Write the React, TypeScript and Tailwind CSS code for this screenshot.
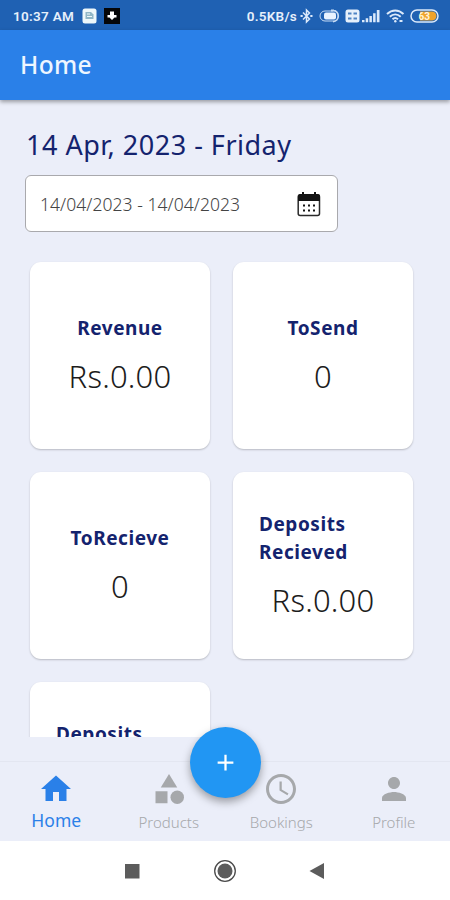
import React from 'react';
import clsx from 'clsx';
import type { IconType } from 'react-icons';
import { MdAccessTime, MdAdd, MdCategory, MdHome, MdPerson } from 'react-icons/md';

interface Stat {
    title: string;
    value?: string;
}

interface Tab {
    label: string;
    icon: IconType;
    active?: boolean;
}

const stats: Stat[] = [
    { title: 'Revenue', value: 'Rs.0.00' },
    { title: 'ToSend', value: '0' },
    { title: 'ToRecieve', value: '0' },
    { title: 'Deposits Recieved', value: 'Rs.0.00' },
    { title: 'Deposits' },
];

const tabs: Tab[] = [
    { label: 'Home', icon: MdHome, active: true },
    { label: 'Products', icon: MdCategory },
    { label: 'Bookings', icon: MdAccessTime },
    { label: 'Profile', icon: MdPerson },
];

const StatusBar = () => (
    <div className="flex h-[30px] shrink-0 items-center bg-[#1f61b3] pt-[2px] pl-[13px] pr-[11px] font-['Roboto',sans-serif] text-[13.5px] font-semibold text-[#e6f0fb]">
        <span className="w-[69px] whitespace-nowrap tracking-[0.3px]">10:37 AM</span>
        <svg className="h-4 w-[15px]" viewBox="0 0 15 16">
            <rect x="0.5" y="0.5" width="14" height="15" rx="2.5" fill="#edf7fa" />
            <path d="M3.500 4h5.500l2.500 2.500V11h-8z" fill="#8fb6c6" />
            <path d="M5 6h3M5 8.500h5" stroke="#edf7fa" />
        </svg>
        <svg className="ml-[7px] h-4 w-4" viewBox="0 0 16 16">
            <rect width="16" height="16" fill="#050608" />
            <path d="M6 3.500h4V7h2.500v2.500h-2L8 12 5.500 9.500h-2V7H6z" fill="#fff" />
        </svg>
        <span className="ml-auto whitespace-nowrap tracking-[0.25px]">0.5KB/s</span>
        <svg className="ml-[3px] h-4 w-[13px]" viewBox="0 0 13 16" fill="none" stroke="#dceafb" strokeWidth="1.500">
            <path d="m3 4.500 6.500 6.500-3 3V2l3 3L3 11.500" />
            <path d="M0.500 8h2.200M10.300 8h2.200" strokeWidth="2" />
        </svg>
        <svg className="ml-[6px] h-4 w-[22px]" viewBox="0 0 22 16" fill="none" stroke="#c6dbf4">
            <path d="M14 3H6a5 5 0 0 0 0 10h8" />
            <rect x="5" y="4.500" width="12" height="7" rx="2" fill="#e9f3ff" stroke="none" />
            <path d="M14 2.500c7 0 7 11 0 11M12 2.500h3" strokeWidth="1.800" />
        </svg>
        <svg className="ml-[4px] h-4 w-[15px]" viewBox="0 0 15 16">
            <rect x="0.5" y="1.500" width="14" height="13" rx="2.500" fill="#e6f0fb" />
            <path d="M3 5.500h3.500M8.500 5.500H12M3 10.500h3.500M8.500 10.500H12" stroke="#4e83c4" strokeWidth="2" />
        </svg>
        <svg className="ml-[2px] h-4 w-[18px]" viewBox="0 0 18 16" fill="#dceafb">
            <path d="M0 12h2.500v2.300H0zM3.700 10.300h2.500v4H3.700zM7.400 8h2.500v6.300H7.400zM11.100 5.300h2.500v9h-2.500zM14.800 2h2.700v12.300h-2.700z" />
        </svg>
        <svg className="ml-[6px] h-4 w-[19px]" viewBox="0 0 19 16" fill="none" stroke="#dceafb" strokeWidth="2">
            <path d="M1 6c5-4.700 11.500-4.700 16.500 0M3.800 8.700c3.300-3 7.600-3 10.900 0M6.500 11.200c1.700-1.500 3.800-1.500 5.500 0" />
            <circle cx="9.300" cy="13.300" r="1.200" fill="#dceafb" stroke="none" />
            <path d="M13.500 13h3" />
        </svg>
        <svg className="ml-[5px] h-4 w-[29px]" viewBox="0 0 29 16">
            <rect x="1" y="2" width="27" height="12" rx="6" fill="#1f61b3" stroke="#dceafb" strokeWidth="1.500" />
            <path d="M10 3.500h12a4.500 4.500 0 0 1 0 9H10z" fill="#f0a32c" />
            <text x="8.500" y="11.800" fontSize="10" fontWeight="700" fill="#fff3d8">63</text>
        </svg>
    </div>
);

const CalendarIcon = () => (
    <svg className="h-[26px] w-6" viewBox="0 0 24 26" fill="#141414">
        <rect x="1.200" y="4" width="21.300" height="20.500" rx="2" fill="#fff" stroke="#2a2a2a" strokeWidth="1.500" />
        <path d="M1 10V5q0-2 2-2h2V1h2v2h10V1h2v2h2q2 0 2 2v5z" />
        <path d="M6 13.500h2v2H6zM11 13.500h2v2h-2zM16 13.500h2v2h-2zM6 18.500h2v2H6zM11 18.500h2v2h-2zM16 18.500h2v2h-2z" />
    </svg>
);

const StatCard: React.FC<Stat> = ({ title, value }) => (
    <div
        className={clsx(
            'flex h-[187px] flex-col rounded-[11px] bg-white px-[26px] shadow-[0_1px_2px_rgba(0,0,0,0.22)]',
            value ? 'items-center justify-center' : 'items-start pt-[38px]'
        )}
    >
        <h3 className="text-[19px] leading-7 font-bold tracking-[0.55px] text-[#14236e]">{title}</h3>
        {value && (
            <p className="mt-[13px] text-[31px] leading-[42px] font-light tracking-[0.2px] text-[#1c1c1c]">{value}</p>
        )}
    </div>
);

export default function App() {
    return (
        <div className="flex h-[900px] w-[450px] flex-col overflow-hidden bg-[#ebeef9] font-['Noto_Sans','Open_Sans',sans-serif]">
            <StatusBar />
            <header className="z-10 flex h-[70px] shrink-0 items-center bg-[#2a80e8] pl-[20px] pt-px shadow-[0_2px_4px_rgba(0,0,0,0.35)]">
                <h1 className="text-[24.5px] font-medium tracking-[0.3px] text-[#eef6ff]">Home</h1>
            </header>

            <main className="h-[637px] shrink-0 overflow-hidden">
                <h2 className="mt-[27px] ml-[26px] text-[27px] leading-9 tracking-[0.5px] whitespace-nowrap text-[#14236e]">14 Apr, 2023 - Friday</h2>
                <div className="mt-[12px] ml-[25px] flex h-[57px] w-[313px] items-center justify-between rounded-md border border-[#a9a9ad] bg-white pr-4 pl-[14px]">
                    <span className="pt-px text-[17.5px] font-light tracking-[0.05px] text-[#444]">14/04/2023 - 14/04/2023</span>
                    <CalendarIcon />
                </div>
                <div className="mt-[30px] ml-[30px] grid grid-cols-[180px_180px] gap-[23px]">
                    {stats.map(s => (
                        <StatCard key={s.title} {...s} />
                    ))}
                </div>
            </main>

            <nav className="relative mt-[24px] grid h-20 shrink-0 grid-cols-4 border-t border-[#e3e6f1]">
                {tabs.map(({ label, icon: Icon, active }) => (
                    <div
                        key={label}
                        className={clsx('flex flex-col items-center pt-[9px]', active ? 'text-[#2a80e8]' : 'text-[#a6a8ab]')}
                    >
                        <Icon size={36} />
                        <span className={clsx('leading-6', active ? 'mt-px text-[17.5px]' : 'mt-[3px] text-[15px] font-light')}>{label}</span>
                    </div>
                ))}
                <button className="absolute -top-[35px] left-[190px] flex size-[71px] items-center justify-center rounded-full bg-[#2196f3] text-white shadow-[0_4px_8px_rgba(0,0,0,0.35)]">
                    <MdAdd size={27} />
                </button>
            </nav>

            <div className="flex grow items-center bg-white pl-[124px]">
                <svg className="h-6 w-[204px]" viewBox="0 0 204 24" fill="#5c5c5c">
                    <rect x="1" y="5" width="14.500" height="14.500" />
                    <circle cx="101" cy="12" r="10.300" fill="none" stroke="#4a4a4a" strokeWidth="1.300" />
                    <circle cx="101" cy="12" r="7.500" />
                    <path d="M185.500 12 200 4v16z" />
                </svg>
            </div>
        </div>
    );
}
